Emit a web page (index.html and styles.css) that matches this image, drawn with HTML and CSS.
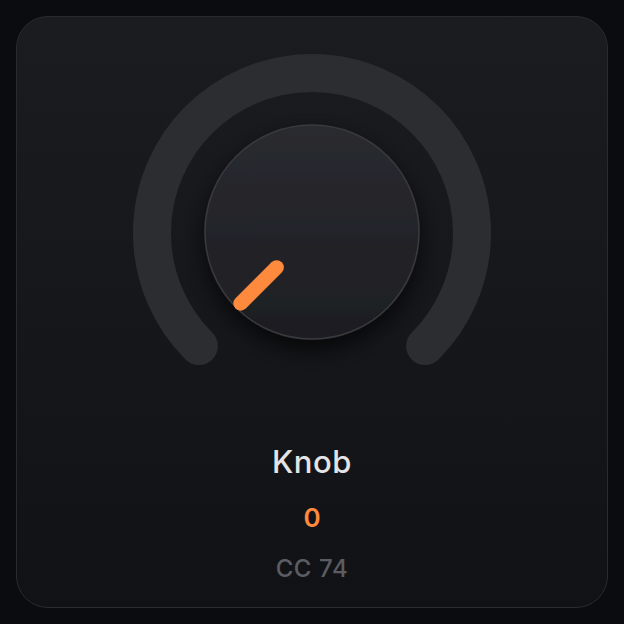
FILE: index.html
```html
<!DOCTYPE html>
<html>
<head>
<meta charset="utf-8">
<link rel="stylesheet" href="styles.css">
</head>
<body>
<div class="card">
  <svg class="dial" width="400" height="340" viewBox="0 0 400 340">
    <defs>
      <linearGradient id="kg" x1="0" y1="0" x2="0" y2="1">
        <stop offset="0" stop-color="#2a2b30"/>
        <stop offset="1" stop-color="#1d1e22"/>
      </linearGradient>
      <filter id="sh" x="-50%" y="-50%" width="200%" height="200%">
        <feDropShadow dx="0" dy="10" stdDeviation="12" flood-color="#000" flood-opacity="0.7"/>
      </filter>
    </defs>
    <path d="M 86.9 310.1 A 160 160 0 1 1 313.1 310.1" fill="none" stroke="#2c2d31" stroke-width="38" stroke-linecap="round"/>
    <circle cx="200" cy="196" r="107" fill="url(#kg)" stroke="#38393e" stroke-width="1.5" filter="url(#sh)"/>
    <line x1="128.6" y1="267.4" x2="164.6" y2="231.4" stroke="#ff8a3d" stroke-width="14.5" stroke-linecap="round"/>
  </svg>
  <div class="labels">
    <div class="name">Knob</div>
    <div class="value">0</div>
    <div class="cc">CC 74</div>
  </div>
</div>
</body>
</html>
```
FILE: styles.css
```css
html, body {
  margin: 0;
  padding: 0;
  background: #0b0c0f;
}
body {
  width: 624px;
  height: 624px;
  padding: 16px;
  box-sizing: border-box;
  font-family: Inter, "Noto Sans", sans-serif;
}
.card {
  width: 592px;
  height: 592px;
  box-sizing: border-box;
  border: 1.5px solid #2a2b30;
  border-radius: 32px;
  background: linear-gradient(180deg, #1b1c20 0%, #111215 100%);
  display: flex;
  flex-direction: column;
  align-items: center;
  padding-top: 19px;
}
.dial {
  display: block;
}
.labels {
  display: flex;
  flex-direction: column;
  align-items: center;
  margin-top: 68px;
}
.name {
  color: #e4e4e7;
  font-size: 31px;
  font-weight: 500;
  letter-spacing: 0.6px;
  line-height: 36px;
}
.value {
  color: #ff8a3d;
  font-size: 26px;
  font-weight: 600;
  line-height: 30px;
  margin-top: 23px;
}
.cc {
  color: #5c5d63;
  font-size: 24px;
  font-weight: 500;
  letter-spacing: 0.6px;
  line-height: 28px;
  margin-top: 22px;
}
```
